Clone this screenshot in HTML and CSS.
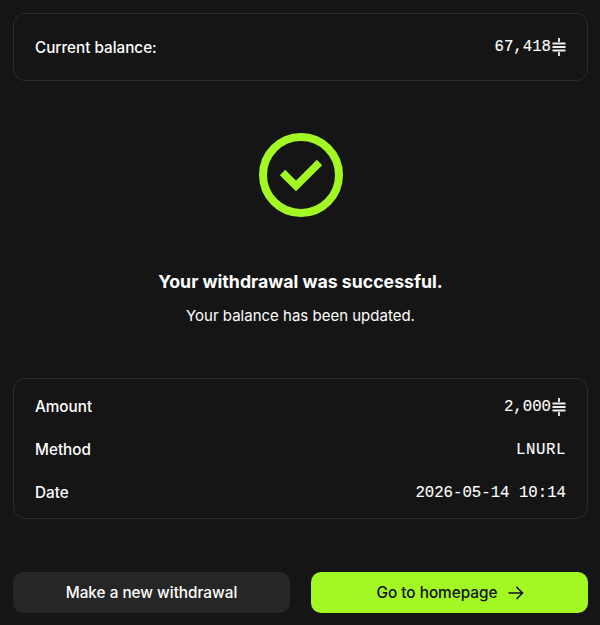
FILE: index.html
```html
<!DOCTYPE html>
<html lang="en">
<head>
  <meta charset="UTF-8">
  <title>Withdrawal successful</title>
  <link rel="stylesheet" href="styles.css">
</head>
<body>
  <main class="page">
    <section class="card balance">
      <div class="row">
        <span>Current balance:</span>
        <span class="mono">67,418<svg class="sats" viewBox="0 0 14 18"><path d="M7 0v4M7 14v4M0.500 5.500h13M0.500 9h13M0.500 12.500h13" /></svg></span>
      </div>
    </section>

    <section class="status">
      <svg class="check" viewBox="0 0 84 84">
        <circle cx="42" cy="42" r="38" />
        <path class="tick" d="M23.5 39.500 L37 53 L60.5 29.500" />
      </svg>
      <h1>Your withdrawal was successful.</h1>
      <p>Your balance has been updated.</p>
    </section>

    <section class="card details">
      <div class="row">
        <span>Amount</span>
        <span class="mono">2,000<svg class="sats" viewBox="0 0 14 18"><path d="M7 0v4M7 14v4M0.500 5.500h13M0.500 9h13M0.500 12.500h13" /></svg></span>
      </div>
      <div class="row">
        <span>Method</span>
        <span class="mono wide">LNURL</span>
      </div>
      <div class="row">
        <span>Date</span>
        <span class="mono">2026-05-14 10:14</span>
      </div>
    </section>

    <div class="actions">
      <button class="btn btn-dark">Make a new withdrawal</button>
      <button class="btn btn-lime">
        Go to homepage
        <svg class="arrow" viewBox="0 0 16 14"><path d="M0.5 7h14M8.5 1l6 6-6 6" /></svg>
      </button>
    </div>
  </main>
</body>
</html>
```

FILE: styles.css
```css
html, body {
  margin: 0;
  height: 100%;
}
body {
  background: #151515;
  color: #fff;
  font-family: Inter, "Noto Sans", sans-serif;
  font-size: 16px;
}
.page {
  box-sizing: border-box;
  width: 600px;
  height: 625px;
  padding: 13px 12px 12px 13px;
  display: flex;
  flex-direction: column;
}
.card {
  border: 1px solid #2b2b2b;
  border-radius: 12px;
  padding: 0 21px;
}
.balance {
  height: 68px;
  box-sizing: border-box;
  display: flex;
  flex-direction: column;
  justify-content: center;
}
.row {
  display: flex;
  justify-content: space-between;
  align-items: center;
  font-weight: 500;
  font-size: 15.25px;
}
.mono {
  font-family: "Liberation Mono", monospace;
  font-size: 15.7px;
  font-weight: 400;
  -webkit-text-stroke: 0.12px #fff;
  display: inline-flex;
  align-items: center;
}
.wide {
  letter-spacing: 0.6px;
}
.sats {
  width: 14px;
  height: 18px;
  margin-left: 1px;
  fill: none;
  stroke: #f2f2f2;
  stroke-width: 1.8;
}
.status {
  display: flex;
  flex-direction: column;
  align-items: center;
  margin-top: 52px;
}
.check {
  width: 84px;
  height: 84px;
  fill: none;
  stroke: #a3f723;
  stroke-width: 8;
}
.tick {
  stroke-width: 7.5;
}
.status h1 {
  margin: 53px 0 0;
  font-size: 17.7px;
  line-height: 24px;
  font-weight: 700;
}
.status p {
  margin: 12px 0 0;
  font-size: 15px;
  line-height: 20px;
}
.details {
  margin-top: 52px;
  height: 141px;
  box-sizing: border-box;
  display: flex;
  flex-direction: column;
  justify-content: space-between;
  padding-top: 18px;
  padding-bottom: 16px;
}
.actions {
  margin-top: auto;
  display: grid;
  grid-template-columns: 277px 277px;
  justify-content: space-between;
}
.btn {
  height: 41px;
  border: none;
  border-radius: 10px;
  font-family: inherit;
  font-size: 15.3px;
  font-weight: 500;
  display: flex;
  align-items: center;
  justify-content: center;
  gap: 11px;
}
.btn-dark {
  background: #262626;
  color: #fff;
}
.btn-lime {
  background: #a3f723;
  color: #111;
  padding-left: 8px;
}
.arrow {
  width: 16px;
  height: 14px;
  fill: none;
  stroke: #111;
  stroke-width: 1.6;
}
```
